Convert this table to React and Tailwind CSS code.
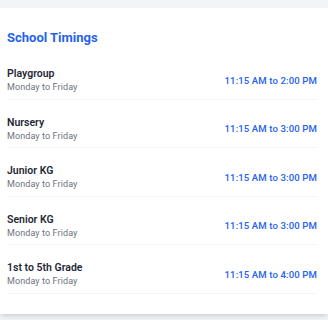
const timings = [
  { name: 'Playgroup', days: 'Monday to Friday', time: '11:15 AM to 2:00 PM' },
  { name: 'Nursery', days: 'Monday to Friday', time: '11:15 AM to 3:00 PM' },
  { name: 'Junior KG', days: 'Monday to Friday', time: '11:15 AM to 3:00 PM' },
  { name: 'Senior KG', days: 'Monday to Friday', time: '11:15 AM to 3:00 PM' },
  { name: '1st to 5th Grade', days: 'Monday to Friday', time: '11:15 AM to 4:00 PM' },
];

export default function App() {
  return (
    <div className="min-h-screen bg-[#f3f4f6] pt-2 font-['Roboto',sans-serif]">
      <div className="bg-white pl-[7px] pr-[11px] pt-5 pb-5 shadow-md">
        <h2 className="text-[13px] font-bold text-[#2563eb] leading-5">School Timings</h2>
        <div className="mt-[3px]">
          {timings.map((t) => (
            <div key={t.name} className="flex items-center justify-between border-b border-gray-100 h-[48.5px] pt-[12px]">
              <div>
                <div className="text-[10.5px] font-semibold text-[#1f2937] leading-[13px]">{t.name}</div>
                <div className="text-[9px] text-[#6b7280] leading-[14px] tracking-[0.1px]">{t.days}</div>
              </div>
              <div className="text-[9.6px] font-medium text-[#2563eb] tracking-[0.1px]">{t.time}</div>
            </div>
          ))}
        </div>
      </div>
    </div>
  );
}
